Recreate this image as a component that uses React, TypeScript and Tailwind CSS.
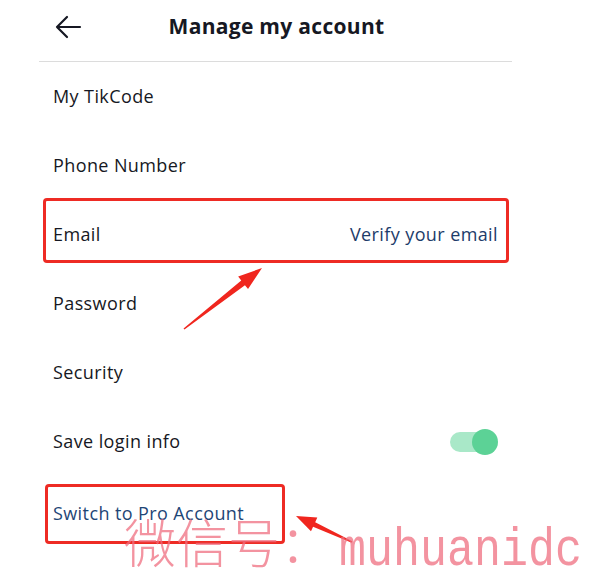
import React from "react";

type Pt = [number, number];

// tapered annotation arrow, tail -> tip
function arrowPoints(tail: Pt, tip: Pt, headLen: number, headW: number, w0: number, w1: number) {
  const dx = tip[0] - tail[0];
  const dy = tip[1] - tail[1];
  const len = Math.hypot(dx, dy);
  const ux = dx / len;
  const uy = dy / len;
  const nx = -uy;
  const ny = ux;
  const bx = tip[0] - ux * headLen;
  const by = tip[1] - uy * headLen;
  const pts: Pt[] = [
    [tail[0] + (nx * w0) / 2, tail[1] + (ny * w0) / 2],
    [bx + (nx * w1) / 2, by + (ny * w1) / 2],
    [bx + (nx * headW) / 2, by + (ny * headW) / 2],
    tip,
    [bx - (nx * headW) / 2, by - (ny * headW) / 2],
    [bx - (nx * w1) / 2, by - (ny * w1) / 2],
    [tail[0] - (nx * w0) / 2, tail[1] - (ny * w0) / 2],
  ];
  return pts.map((p) => p.join(",")).join(" ");
}

const rows = [
  { label: "My TikCode" },
  { label: "Phone Number" },
  { label: "Email", right: "Verify your email" },
  { label: "Password" },
  { label: "Security" },
  { label: "Save login info", toggle: true },
];

export default function App() {
  return (
    <div
      className="relative w-[596px] h-[586px] bg-white overflow-hidden"
      style={{ fontFamily: "'Open Sans', 'Noto Sans', sans-serif" }}
    >
      <div className="ml-[39px] w-[473px]">
        {/* header */}
        <div className="relative h-[62px] border-b border-[#dcdcdc] flex items-center justify-center">
          <svg
            className="absolute left-[15px] top-[14px]"
            width="28"
            height="26"
            viewBox="0 0 28 26"
            fill="none"
            stroke="#161823"
            strokeWidth="2.2"
            strokeLinecap="round"
            strokeLinejoin="round"
          >
            <path d="M26 13H3M13 3L3 13l10 10" />
          </svg>
          <h1 className="text-[21px] font-bold text-[#161823] tracking-[0.3px] -mt-[8px] ml-[2px]">
            Manage my account
          </h1>
        </div>

        {/* rows */}
        <div className="flex flex-col text-[18px] tracking-[0.4px]">
          {rows.map((r) => (
            <div key={r.label} className="h-[69px] flex items-center justify-between pl-[14px] pr-[14px]">
              <span className="text-[#161823]">{r.label}</span>
              {r.right && <span className="text-[#1d3c6a]">{r.right}</span>}
              {r.toggle && (
                <div className="relative w-[48px] h-[26px] flex items-center">
                  <div className="w-[44px] h-[20px] rounded-full bg-[#a9e8c8]" />
                  <div className="absolute right-0 top-0 w-[26px] h-[26px] rounded-full bg-[#5cd296]" />
                </div>
              )}
            </div>
          ))}
          <div className="h-[69px] flex items-center pl-[14px] pt-[6px]">
            <span className="text-[#1e4676]">Switch to Pro Account</span>
          </div>
        </div>
      </div>

      {/* annotation boxes */}
      <div className="absolute left-[43px] top-[198px] w-[466px] h-[65px] border-[3px] border-[#ee2b24] rounded-[4px]" />
      <div className="absolute left-[45px] top-[484px] w-[240px] h-[60px] border-[3px] border-[#ee2b24] rounded-[4px]" />

      {/* arrows */}
      <svg className="absolute left-0 top-0" width="596" height="586">
        <polygon points={arrowPoints([184, 329], [262, 268], 24, 16, 1.5, 6)} fill="#f0261e" />
        <polygon points={arrowPoints([352, 542], [296, 516], 20, 15, 1.5, 5)} fill="#f0261e" />
      </svg>

      {/* watermark */}
      <span
        className="absolute left-[124px] top-[515px] text-[52px] leading-none font-light text-[#ef6f80]/75 whitespace-nowrap"
        style={{ fontFamily: "'Noto Sans CJK SC', serif" }}
      >
        微信号：
      </span>
      <span
        className="absolute left-[339px] top-[531px] text-[45px] leading-none text-[#ef6f80]/75 whitespace-nowrap scale-y-[1.2] origin-[center_34px]"
        style={{ fontFamily: "'Liberation Mono', monospace" }}
      >
        muhuanidc
      </span>
    </div>
  );
}
